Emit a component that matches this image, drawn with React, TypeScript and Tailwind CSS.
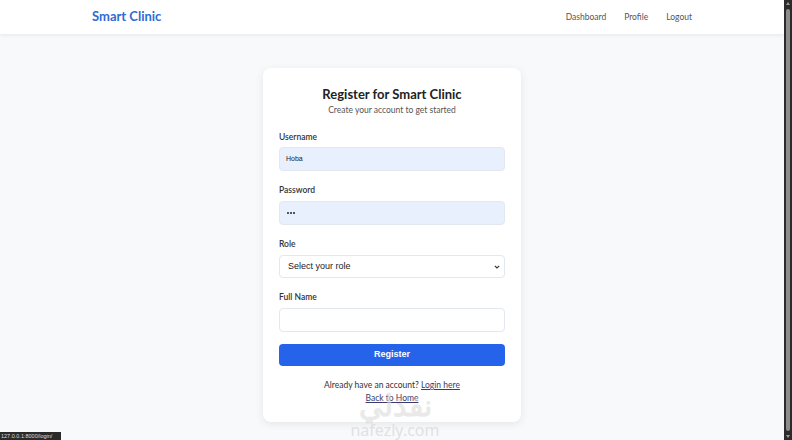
const App = () => {
  return (
    <div className="relative flex h-[440px] w-full overflow-hidden bg-[#f8f9fb] font-['Lato','Noto_Sans',sans-serif]">
      <div className="flex flex-1 flex-col">
        {/* Navbar */}
        <nav className="h-[34px] bg-white shadow-[0_1px_4px_rgba(0,0,0,0.08)]">
          <div className="mx-auto flex h-full w-[600px] items-center justify-between">
            <span className="text-[13px] font-bold text-[#2f6bd3]">Smart Clinic</span>
            <div className="flex items-center gap-[18px] text-[8.5px] text-[#555]">
              <span>Dashboard</span>
              <span>Profile</span>
              <span>Logout</span>
            </div>
          </div>
        </nav>

        {/* Register card */}
        <main className="flex justify-center pt-[34px]">
          <div className="w-[258px] rounded-lg bg-white px-[16px] pt-[17px] pb-[17px] shadow-[0_2px_8px_rgba(0,0,0,0.08)]">
            <h1 className="text-center text-[13px] leading-[18px] font-bold text-[#222]">Register for Smart Clinic</h1>
            <p className="mb-[14px] text-center text-[8.5px] leading-[14px] text-[#555]">Create your account to get started</p>

            <div className="mb-[13px]">
              <label className="mb-[4px] block text-[8.5px] leading-[12px] font-semibold text-[#333]">Username</label>
              <div className="flex h-[24px] items-center rounded-[4px] border border-[#e3e7ef] bg-[#e8effd] px-[6px] font-['Liberation_Sans',sans-serif] text-[7px] text-[#222]">Hoba</div>
            </div>

            <div className="mb-[13px]">
              <label className="mb-[5px] block text-[8.5px] leading-[12px] font-semibold text-[#333]">Password</label>
              <div className="flex h-[24px] items-center gap-[1px] rounded-[4px] border border-[#e3e7ef] bg-[#e8effd] px-[7px]">
                <span className="h-[2px] w-[2px] rounded-full bg-[#222]" />
                <span className="h-[2px] w-[2px] rounded-full bg-[#222]" />
                <span className="h-[2px] w-[2px] rounded-full bg-[#222]" />
              </div>
            </div>

            <div className="mb-[13px]">
              <label className="mb-[5px] block text-[8.5px] leading-[12px] font-semibold text-[#333]">Role</label>
              <div className="flex h-[23px] items-center justify-between rounded-[4px] border border-[#e3e7ef] bg-white pr-[4px] pl-[8px] font-['Liberation_Sans',sans-serif] text-[9px] text-[#222]">
                <span>Select your role</span>
                <svg width="6" height="4" viewBox="0 0 6 4"><path d="M0.8 0.8 L3 3 L5.2 0.8" fill="none" stroke="#333" strokeWidth="1.1" /></svg>
              </div>
            </div>

            <div>
              <label className="mb-[5px] block text-[8.5px] leading-[12px] font-semibold text-[#333]">Full Name</label>
              <div className="h-[24px] rounded-[4px] border border-[#e3e7ef] bg-white" />
            </div>

            <button className="mt-[12px] flex h-[22px] w-full items-center justify-center rounded-[4px] bg-[#2563eb] font-['Liberation_Sans',sans-serif] text-[9px] font-bold text-white">Register</button>

            <p className="mt-[13px] text-center text-[8.5px] leading-[13px] text-[#333]">
              Already have an account? <span className="text-[#3b3b6b] underline">Login here</span>
            </p>
            <p className="text-center text-[8.5px] leading-[13px] text-[#3b3b6b] underline">Back to Home</p>
          </div>
        </main>
      </div>

      {/* Scrollbar */}
      <div className="flex w-[8px] flex-col items-center bg-[#2b2b2b] py-[2px]">
        <div className="h-0 w-0 border-x-[2px] border-b-[3px] border-x-transparent border-b-[#9a9a9a]" />
        <div className="mt-[4px] w-[4px] flex-1 rounded-[2px] bg-[#8c8c8c]" />
        <div className="mt-[4px] h-0 w-0 border-x-[2px] border-t-[3px] border-x-transparent border-t-[#9a9a9a]" />
      </div>

      {/* Watermark */}
      <div className="pointer-events-none absolute top-[389px] left-[340px] flex w-[110px] flex-col items-center text-[#dcdcdc]">
        <span className="font-['Noto_Sans',sans-serif] text-[30px] leading-[32px] font-bold opacity-60">نفذلي</span>
        <span className="font-['Noto_Sans',sans-serif] text-[16px] leading-[18px] opacity-80">nafezly.com</span>
      </div>

      {/* Status tooltip */}
      <div className="absolute bottom-0 left-0 flex h-[8px] w-[61px] items-center bg-[#2a2a2a] px-[1px] font-['Liberation_Sans',sans-serif] text-[5.5px] text-[#ddd]">127.0.0.1:8000/login/</div>
    </div>
  );
};

export default App;
